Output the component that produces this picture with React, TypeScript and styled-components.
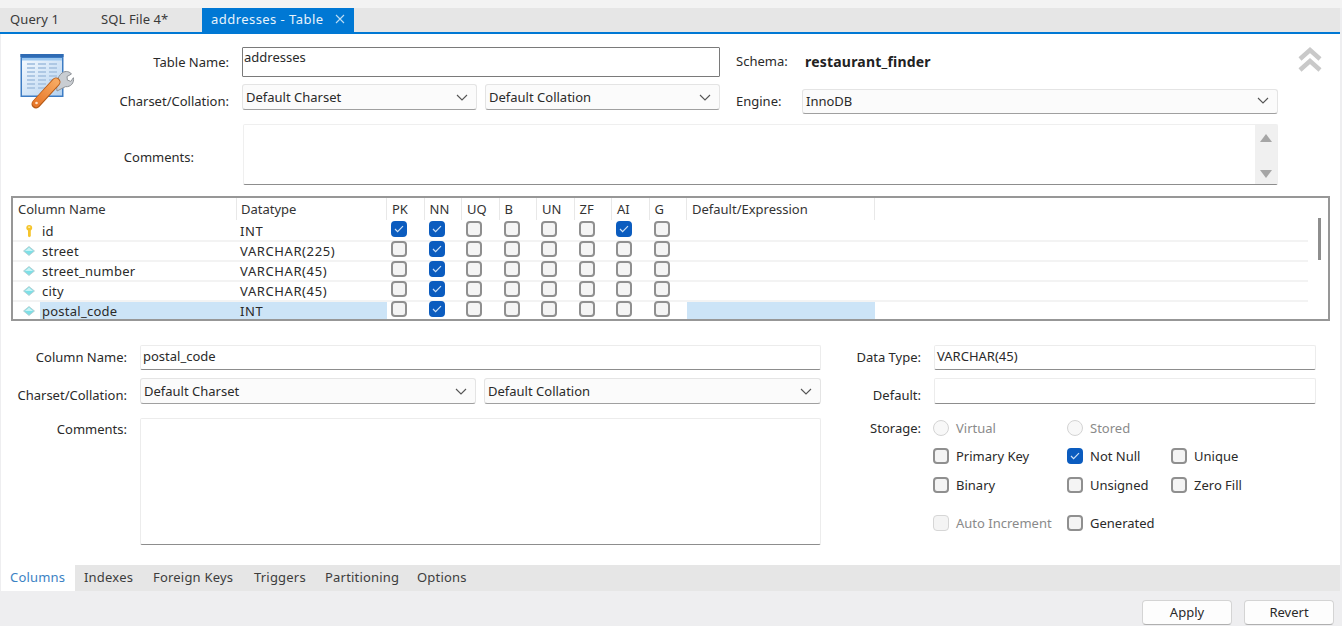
import React from "react";
import styled, { createGlobalStyle } from "styled-components";

const Global = createGlobalStyle`
  html, body { margin: 0; padding: 0; background: #eeeef0; }
  * { box-sizing: border-box; }
  body { font-family: "Noto Sans", "Open Sans", sans-serif; font-size: 13px; color: #2a2a2a; }
`;

const Page = styled.div`
  width: 1342px; height: 626px; overflow: hidden;
  display: flex; flex-direction: column; background: #eeeef0;
`;
const TopStrip = styled.div`height: 8px; background: #f3f3f3;`;
const TabBar = styled.div`
  height: 26px; margin-right: 2px; padding-left: 1px; display: flex; align-items: stretch;
  background: #e6e6e6; border-bottom: 2px solid #0078d4;
`;
const DocTab = styled.div<{ $w: number; $active?: boolean }>`
  width: ${p => p.$w}px; display: flex; align-items: center; gap: 11px;
  padding-left: 9px; padding-bottom: 2px; letter-spacing: ${p => (p.$active ? 0.45 : 0.1)}px;
  background: ${p => (p.$active ? "#0078d4" : "transparent")};
  color: ${p => (p.$active ? "#e8f3fb" : "#3a3a3a")};
`;
const Body = styled.div`
  height: 531px; margin: 0 2px 0 1px; background: #fff;
  display: flex; flex-direction: column;
`;
const Header = styled.div`
  display: grid; padding: 13px 0 0 0;
  grid-template-columns: 228px 491px 82px 476px 1fr;
  grid-template-rows: 30px 33px 61px;
  row-gap: 7px;
`;
const Label = styled.label<{ $pad?: number; $top?: number; $bottom?: number }>`
  display: flex; justify-content: flex-end; align-items: center;
  padding-right: ${p => p.$pad ?? 0}px; padding-top: ${p => p.$top ?? 0}px; padding-bottom: ${p => p.$bottom ?? 0}px;
  white-space: nowrap; color: #2a2a2a;
`;
const NameCell = styled.div`display: flex; align-items: flex-start;`;
const BrandIcon = styled.svg`width: 56px; height: 56px; margin: 6px 0 0 18px; flex: none;`;
const NameLabel = styled(Label)`flex: 1; height: 30px;`;
const FieldSlot = styled.div`padding-left: 13px;`;
const TextField = styled.div<{ $strong?: boolean; $h?: number }>`
  height: ${p => p.$h ?? 25}px; padding: 0 3px 3px 2px; display: flex; align-items: ${p => (p.$strong ? "flex-start" : "center")};
  background: #fff;
  border: 1px solid #ececec; border-bottom: 1px solid #8d8d8d;
  border-radius: 2px;
  ${p => p.$strong && "border: 1.5px solid #7a7a7a; border-radius: 1px; line-height: 18px; padding-left: 1px;"}
`;
const Select = styled.div<{ $h?: number }>`
  height: ${p => p.$h ?? 26}px; padding: 0 8px ${p => (p.$h ? 2 : 0)}px 3px; display: flex; align-items: center; justify-content: space-between;
  background: #fbfbfb; border: 1px solid #e4e4e4; border-bottom: 1.5px solid #a0a0a0; border-radius: 3px;
  svg { color: #555; flex: none; }
`;
const SelectPair = styled.div`display: grid; grid-template-columns: 235px 235px; column-gap: 8px;`;
const LabelCell = styled.div`
  display: flex; align-items: center; padding: 0 0 2px 16px; color: #2a2a2a;
`;
const SchemaRow = styled.div`display: flex; align-items: center; padding: 0 0 2px 3px;`;
const Bold = styled.span`font-weight: 700; font-size: 14px; letter-spacing: 0.2px; color: #222;`;
const Engine = styled.div`padding-top: 5px;`;
const EngineLabel = styled(LabelCell)`padding: 1px 0 0 16px;`;
const Chevron = styled.svg`width: 28px; height: 28px; margin: -1px 0 0 18px; grid-column: 5;`;
const HeaderArea = styled.div`
  grid-column: 2 / span 3; margin-left: 14px;
  height: 61px; display: flex; justify-content: flex-end;
  border: 1px solid #efefef; border-bottom: 1.5px solid #8d8d8d; border-radius: 2px;
`;
const MiniScroll = styled.div`
  width: 22px; background: #f0f0f0; display: flex; flex-direction: column; align-items: center; justify-content: space-between;
  padding: 9px 0 6px; color: #a6a6a6;
`;
const Grid = styled.div`
  margin: 11px 0 0 10px; width: 1319px; height: 125px; border: 2px solid #979797;
  display: flex; background: #fff; overflow: hidden;
`;
const GridMain = styled.div`flex: 1; display: flex; flex-direction: column;`;
const COLS = "224px 150px repeat(8, 37.5px) 187.5px 1fr";
const HeadRow = styled.div`
  display: grid; grid-template-columns: ${COLS}; height: 24px; flex: none;
`;
const HeadCell = styled.div<{ $pad: number }>`
  display: flex; align-items: center; padding-left: ${p => p.$pad}px; border-right: 1px solid #e8e8e8; margin: 0 0 2px;
  color: #333;
`;
const Row = styled.div`
  display: grid; grid-template-columns: ${COLS}; height: 20px; flex: none; border-bottom: 2px solid #f3f3f3;
`;
const ColName = styled.div`display: flex; align-items: center;`;
const RowIcon = styled.svg`width: 14px; height: 14px; margin-left: 9px; margin-right: 4px; flex: none;`;
const ColText = styled.div<{ $sel?: boolean }>`
  flex: 1; height: 100%; display: flex; align-items: center; padding-left: 2px;
  background: ${p => (p.$sel ? "#cce4f7" : "transparent")}; letter-spacing: 0.25px;
`;
const TypeCell = styled.div<{ $sel?: boolean }>`
  display: flex; align-items: center; padding-left: 3px; letter-spacing: 0.6px;
  background: ${p => (p.$sel ? "#cce4f7" : "transparent")};
`;
const CheckCell = styled.div`display: flex; align-items: flex-start; padding-left: 4px; margin-top: -1px;`;
const ExprCell = styled.div<{ $sel?: boolean }>`background: ${p => (p.$sel ? "#cce4f7" : "transparent")};`;
const ScrollTrack = styled.div`width: 20px; background: #fff; padding: 20px 0 0 10px;`;
const ScrollThumb = styled.div`width: 3px; height: 42px; background: #8e8e8e;`;
const Box = styled.span<{ $on?: boolean; $off?: boolean }>`
  width: 16px; height: 16px; flex: none; border-radius: 4px; display: inline-flex; align-items: center; justify-content: center;
  background: ${p => (p.$on ? "#0b5cbf" : "#f4f4f4")};
  border: ${p => (p.$off ? 1 : 2)}px solid ${p => (p.$on ? "#0b5cbf" : p.$off ? "#d6d6d6" : "#8f8f8f")};
`;
const Detail = styled.div`
  margin-top: 24px; display: grid; height: 200px;
  grid-template-columns: 139px 681px 1fr;
`;
const DetailLabels = styled.div`
  display: grid; grid-template-rows: 25px 26px 127px; row-gap: 8px; padding-right: 13px;
  > :nth-child(3) { align-items: flex-start; padding-top: 8px; }
`;
const DetailFields = styled.div`display: grid; grid-template-rows: 25px 26px 127px; row-gap: 8px;`;
const DetailSelects = styled.div`display: grid; grid-template-columns: 336px 337px; column-gap: 8px;`;
const BigArea = styled.div`
  height: 127px; margin-top: 6px; border: 1px solid #ececec; border-bottom: 1.5px solid #8d8d8d; border-radius: 2px; background: #fff;
`;
const Side = styled.div`display: grid; grid-template-columns: 113px 382px; grid-template-rows: 25px 26px auto; row-gap: 8px;`;
const SideLabel = styled(Label)`padding-right: 13px;`;
const StorageLabel = styled(SideLabel)`align-items: flex-start; padding-top: 7px;`;
const Options = styled.div`
  display: grid; grid-template-columns: 134px 104px 1fr; grid-template-rows: 28px 29px 29px 29px; padding-top: 6px; margin-left: -1px;
`;
const Opt = styled.div<{ $dim?: boolean; $gap?: boolean }>`
  display: flex; align-items: center; gap: 7px; white-space: nowrap; height: 20px;
  color: ${p => (p.$dim ? "#8a8a8a" : "#2a2a2a")};
  ${p => p.$gap && "margin-top: 9px;"}
`;
const Radio = styled.span`
  width: 16px; height: 16px; border-radius: 50%; background: #f8f8f8; border: 1.5px solid #d4d4d4; flex: none;
`;
const BottomTabs = styled.div`
  height: 26px; margin: 0 2px 0 1px; background: #e6e6e6; display: flex;
`;
const BTab = styled.div<{ $w: number; $active?: boolean }>`
  width: ${p => p.$w}px; display: flex; align-items: center; padding: 0 0 2px 9px;
  background: ${p => (p.$active ? "#fff" : "transparent")}; color: ${p => (p.$active ? "#3b82c4" : "#3d3d3d")};
  letter-spacing: 0.2px;
`;
const Actions = styled.div`
  flex: 1; display: flex; justify-content: flex-end; gap: 12px; padding: 9px 8px 0 0;
`;
const Btn = styled.button`
  width: 90px; height: 25px; border: 1px solid #d4d4d4; border-bottom: 1.5px solid #b0b0b0; border-radius: 4px; background: #fdfdfd;
  font: inherit; color: #2a2a2a; padding: 0 0 2px;
`;

const Caret = () => (
  <svg width="12" height="7" viewBox="0 0 12 7" fill="none" stroke="currentColor" strokeWidth="1.1"><path d="M1 1l5 5 5-5" /></svg>
);
const Tick = () => (
  <svg width="10" height="8" viewBox="0 0 10 8" fill="none" stroke="#cfe2f7" strokeWidth="1.2"><path d="M1 4l2.6 2.6L9 1.2" /></svg>
);
const Check = ({ on, off }: { on?: boolean; off?: boolean }) => <Box $on={on} $off={off}>{on && <Tick />}</Box>;
const Diamond = () => (
  <RowIcon viewBox="0 0 14 14"><path d="M7 2.5L12.5 7 7 11.5 1.5 7z" fill="#7fdfe6" stroke="#b6c9cc" strokeWidth=".8" /><path d="M7 3.5L11 7H3z" fill="#c6f3f5" /></RowIcon>
);
const Key = () => (
  <RowIcon viewBox="0 0 14 14"><path d="M7.2 1c2 0 3 1.3 3 2.9 0 1.2-.7 2-1.4 2.6V12.2L7.2 13.2 6 12.2V6.5C5 5.8 4.3 5 4.3 3.9 4.3 2.3 5.3 1 7.2 1z" fill="#f5c42c" /><path d="M6.2 2.4h2v1.6h-2z" fill="#fdeb9b" /></RowIcon>
);
const TableIcon = () => (
  <BrandIcon viewBox="0 0 56 56">
    <defs>
      <linearGradient id="tg" x1="0" y1="0" x2="1" y2="1"><stop offset="0" stopColor="#f4f9fe" /><stop offset="1" stopColor="#b4d2f0" /></linearGradient>
      <linearGradient id="wg" x1="0" y1="1" x2="1" y2="0"><stop offset="0" stopColor="#e8782a" /><stop offset="1" stopColor="#f6a860" /></linearGradient>
    </defs>
    <rect x="1.5" y="1" width="43" height="43" fill="#3d7cc4" />
    <rect x="1.5" y="1" width="43" height="3" fill="#2f6bb4" />
    <rect x="3" y="6.5" width="40" height="36" fill="url(#tg)" />
    <rect x="3" y="5" width="40" height="2.5" fill="#9cc8f0" />
    {[10, 14, 18, 22, 26, 30, 34].map(y => (
      <g key={y} fill="#aec8e4">
        <rect x="8" y={y} width="8" height="2" />
        <rect x="19" y={y} width="8" height="2" />
        <rect x="30" y={y} width="8" height="2" />
      </g>
    ))}
    <path d="M43 20c4-3 8-1 9.5 1l-4.5 2.5.4 3.6 3.4 1.3 2.6-3.7c1 5-2.5 9.5-8 9L38 38c-1-7 0-14 5-18z" fill="#c9cdd2" stroke="#8e9297" strokeWidth="1" />
    <path d="M17 51 L37 29" stroke="#b55a16" strokeWidth="9" strokeLinecap="round" />
    <path d="M17 50.5 L37 29" stroke="url(#wg)" strokeWidth="7" strokeLinecap="round" />
    <circle cx="17.5" cy="50" r="1.3" fill="#ffe2c4" />
  </BrandIcon>
);

const rows = [
  { name: "id", type: "INT", key: true, checks: [0, 1, 6] },
  { name: "street", type: "VARCHAR(225)", checks: [1] },
  { name: "street_number", type: "VARCHAR(45)", checks: [1] },
  { name: "city", type: "VARCHAR(45)", checks: [1] },
  { name: "postal_code", type: "INT", sel: true, checks: [1] },
];
const heads = ["PK", "NN", "UQ", "B", "UN", "ZF", "AI", "G"];

export default function App() {
  return (
    <Page>
      <Global />
      <TopStrip />
      <TabBar>
        <DocTab $w={91}>Query 1</DocTab>
        <DocTab $w={110}>SQL File 4*</DocTab>
        <DocTab $w={152} $active>addresses - Table
          <svg width="10" height="10" viewBox="0 0 10 10" stroke="#bcdcf4" strokeWidth="1.1"><path d="M1 1l8 8M9 1l-8 8" /></svg>
        </DocTab>
      </TabBar>
      <Body>
        <Header>
          <NameCell>
            <TableIcon />
            <NameLabel>Table Name:</NameLabel>
          </NameCell>
          <FieldSlot><TextField $strong $h={30}>addresses</TextField></FieldSlot>
          <LabelCell>Schema:</LabelCell>
          <SchemaRow><Bold>restaurant_finder</Bold></SchemaRow>
          <Chevron viewBox="0 0 28 28" fill="none" stroke="#c9c9c9" strokeWidth="4.5">
            <path d="M4 13L14 4l10 9M4 24l10-9 10 9" />
          </Chevron>
          <Label>Charset/Collation:</Label>
          <FieldSlot>
            <SelectPair>
              <Select>Default Charset<Caret /></Select>
              <Select>Default Collation<Caret /></Select>
            </SelectPair>
          </FieldSlot>
          <EngineLabel>Engine:</EngineLabel>
          <Engine><Select $h={25}>InnoDB<Caret /></Select></Engine>
          <div />
          <Label $pad={35} $top={5}>Comments:</Label>
          <HeaderArea>
            <MiniScroll>
              <svg width="12" height="8" viewBox="0 0 12 8" fill="currentColor"><path d="M6 0l6 8H0z" /></svg>
              <svg width="12" height="8" viewBox="0 0 12 8" fill="currentColor"><path d="M0 0h12L6 8z" /></svg>
            </MiniScroll>
          </HeaderArea>
        </Header>
        <Grid>
          <GridMain>
            <HeadRow>
              <HeadCell $pad={5}>Column Name</HeadCell>
              <HeadCell $pad={4}>Datatype</HeadCell>
              {heads.map(h => <HeadCell key={h} $pad={5}>{h}</HeadCell>)}
              <HeadCell $pad={5}>Default/Expression</HeadCell>
              <div />
            </HeadRow>
            {rows.map(r => (
              <Row key={r.name}>
                <ColName>
                  {r.key ? <Key /> : <Diamond />}
                  <ColText $sel={r.sel}>{r.name}</ColText>
                </ColName>
                <TypeCell $sel={r.sel}>{r.type}</TypeCell>
                {heads.map((h, i) => <CheckCell key={h}><Check on={r.checks.includes(i)} /></CheckCell>)}
                <ExprCell $sel={r.sel} />
                <div />
              </Row>
            ))}
          </GridMain>
          <ScrollTrack><ScrollThumb /></ScrollTrack>
        </Grid>
        <Detail>
          <DetailLabels>
            <Label $bottom={2}>Column Name:</Label>
            <Label $top={8}>Charset/Collation:</Label>
            <Label>Comments:</Label>
          </DetailLabels>
          <DetailFields>
            <TextField>postal_code</TextField>
            <DetailSelects>
              <Select>Default Charset<Caret /></Select>
              <Select>Default Collation<Caret /></Select>
            </DetailSelects>
            <BigArea />
          </DetailFields>
          <Side>
            <SideLabel $bottom={2}>Data Type:</SideLabel>
            <TextField>VARCHAR(45)</TextField>
            <SideLabel $top={8}>Default:</SideLabel>
            <TextField $h={26} />
            <StorageLabel>Storage:</StorageLabel>
            <Options>
              <Opt $dim><Radio />Virtual</Opt>
              <Opt $dim><Radio />Stored</Opt>
              <div />
              <Opt><Check />Primary Key</Opt>
              <Opt><Check on />Not Null</Opt>
              <Opt><Check />Unique</Opt>
              <Opt><Check />Binary</Opt>
              <Opt><Check />Unsigned</Opt>
              <Opt><Check />Zero Fill</Opt>
              <Opt $dim $gap><Check off />Auto Increment</Opt>
              <Opt $gap><Check />Generated</Opt>
            </Options>
          </Side>
        </Detail>
      </Body>
      <BottomTabs>
        <BTab $w={74} $active>Columns</BTab>
        <BTab $w={69}>Indexes</BTab>
        <BTab $w={101}>Foreign Keys</BTab>
        <BTab $w={71}>Triggers</BTab>
        <BTab $w={92}>Partitioning</BTab>
        <BTab $w={70}>Options</BTab>
      </BottomTabs>
      <Actions>
        <Btn>Apply</Btn>
        <Btn>Revert</Btn>
      </Actions>
    </Page>
  );
}
